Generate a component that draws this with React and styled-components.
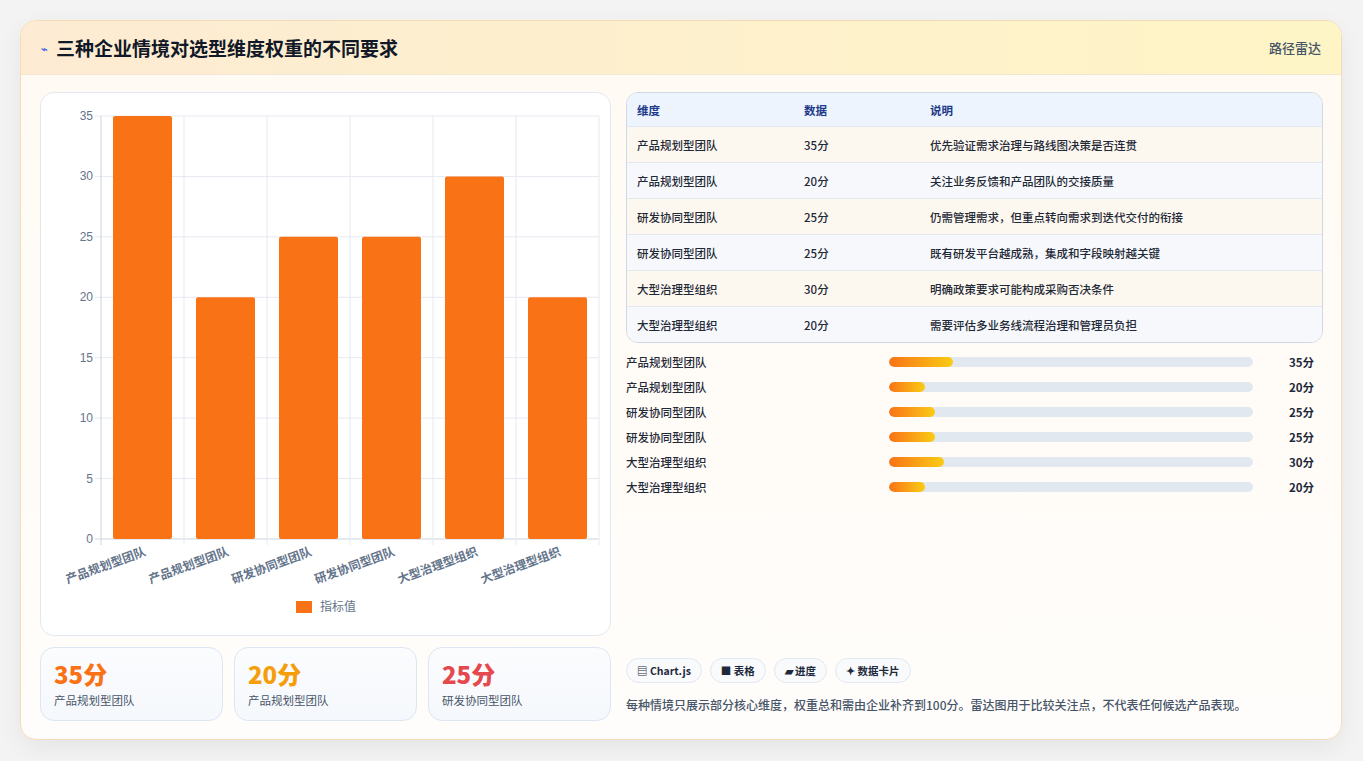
import React from "react";
import styled, { createGlobalStyle } from "styled-components";

const Global = createGlobalStyle`
  html,body{margin:0;padding:0;background:#f3f3f3;}
  body{font-family:"Noto Sans CJK SC","Noto Sans",sans-serif;}
`;

const data = [
  ["产品规划型团队", 35, "优先验证需求治理与路线图决策是否连贯"],
  ["产品规划型团队", 20, "关注业务反馈和产品团队的交接质量"],
  ["研发协同型团队", 25, "仍需管理需求，但重点转向需求到迭代交付的衔接"],
  ["研发协同型团队", 25, "既有研发平台越成熟，集成和字段映射越关键"],
  ["大型治理型组织", 30, "明确政策要求可能构成采购否决条件"],
  ["大型治理型组织", 20, "需要评估多业务线流程治理和管理员负担"],
];

const Page = styled.div`padding:20px 20px 20px 20px;width:1323px;box-sizing:border-box;`;
const Card = styled.div`
  width:1322px;height:720px;box-sizing:border-box;border:1px solid #f6dcb4;border-radius:16px;
  background:linear-gradient(180deg,#fffaf3,#fffdfb);overflow:hidden;display:flex;flex-direction:column;
  box-shadow:0 8px 24px rgba(0,0,0,0.06);
`;
const Header = styled.div`
  height:55px;box-sizing:border-box;display:flex;align-items:center;justify-content:space-between;
  padding:0 20px;background:linear-gradient(90deg,#fdebd3,#fef5c6);border-bottom:1px solid #f3e6d3;
`;
const Title = styled.h1`margin:0;font-size:19px;font-weight:700;color:#111827;display:flex;align-items:center;gap:8px;`;
const Bolt = styled.span`color:#4f6fe0;font-size:11px;`;
const Badge = styled.span`font-size:13px;color:#475569;font-weight:500;`;
const Body = styled.div`flex:1;display:flex;gap:15px;padding:17px 18px 18px 19px;`;
const Left = styled.div`width:571px;display:flex;flex-direction:column;gap:11px;`;
const Right = styled.div`flex:1;display:flex;flex-direction:column;`;
const ChartCard = styled.div`height:544px;box-sizing:border-box;border:1px solid #e2e8f0;border-radius:14px;background:#fff;position:relative;`;
const Stats = styled.div`display:grid;grid-template-columns:repeat(3,1fr);gap:11px;`;
const Stat = styled.div`height:74px;box-sizing:border-box;border:1px solid #dde6f3;border-radius:14px;background:linear-gradient(180deg,#fbfcfe,#f5f8fc);padding:10px 13px;`;
const StatVal = styled.div`font-size:24px;font-weight:800;color:${p=>p.c};line-height:32px;`;
const StatLbl = styled.div`font-size:11.5px;color:#475569;margin-top:2px;`;
const Table = styled.div`border:1px solid #cfd9e6;border-radius:12px;overflow:hidden;`;
const Row = styled.div`
  display:grid;grid-template-columns:167px 126px 1fr;height:${p=>p.h?33:35}px;align-items:center;padding-left:10px;
  font-size:11.5px;color:${p=>p.h?"#1e3a8a":"#1f2937"};font-weight:${p=>p.h?600:500};
  background:${p=>p.h?"#edf4fd":p.odd?"#fdf8ef":"#f6f8fb"};
  border-top:${p=>p.h?"none":"1px solid #e2e8f0"};
`;
const Bars = styled.div`display:flex;flex-direction:column;gap:7px;margin-top:10px;`;
const BarRow = styled.div`display:grid;grid-template-columns:263px 364px 1fr;align-items:center;height:18px;font-size:11.5px;color:#1f2937;font-weight:500;`;
const Track = styled.div`height:10px;border-radius:5px;background:#e2e8f0;overflow:hidden;`;
const Fill = styled.div`height:100%;border-radius:5px;background:linear-gradient(90deg,#f97316,#facc15);`;
const BarVal = styled.span`padding-left:36px;font-weight:700;color:#1e293b;`;
const Spacer = styled.div`flex:1;`;
const Tags = styled.div`display:flex;gap:8px;`;
const Tag = styled.span`height:25px;box-sizing:border-box;padding:0 10px;border:1px solid #e2e8f0;border-radius:13px;background:#f8fafc;font-size:10.5px;font-weight:600;color:#1e293b;display:flex;align-items:center;gap:3px;`;
const Note = styled.p`margin:13px 0 8px;font-size:12px;font-weight:500;color:#475569;`;

function Chart(){
  const x0=60,x1=558,y0=23,y1=446;const ppu=(y1-y0)/35;const cw=(x1-x0)/6;
  return (
    <svg width="570" height="544" style={{display:"block"}}>
      {[0,5,10,15,20,25,30,35].map(v=>{const y=y1-v*ppu;return <g key={v}>
        <line x1={x0-6} x2={x1} y1={y} y2={y} stroke={v===0?"#cbd5e1":"#e5e9f0"}/>
        <text x={x0-8} y={y+4} textAnchor="end" fontSize="12" fill="#64748b" fontFamily="Liberation Sans,sans-serif">{v}</text></g>;})}
      {[0,1,2,3,4,5,6].map(i=><line key={i} x1={x0+i*cw} x2={x0+i*cw} y1={y0} y2={y1+6} stroke={i===0?"#cbd5e1":"#e5e9f0"}/>)}
      {data.map((d,i)=>{const h=d[1]*ppu;return <rect key={i} x={x0+i*cw+12} y={y1-h} width={cw-24} height={h} rx="2" fill="#f97316"/>;})}
      {data.map((d,i)=>{const cx=x0+i*cw+cw/2+4;return <text key={i} transform={`translate(${cx},462) rotate(-20)`} textAnchor="end" fontSize="12" fontWeight="600" fill="#64748b" fontFamily="Noto Sans CJK SC,sans-serif">{d[0]}</text>;})}
      <rect x="255" y="508" width="16" height="12" fill="#f97316"/>
      <text x="279" y="518" fontSize="12" fill="#64748b" fontFamily="Noto Sans CJK SC,sans-serif">指标值</text>
    </svg>
  );
}

export default function App(){
  return <Page><Global/>
    <Card>
      <Header><Title><Bolt>⌁</Bolt>三种企业情境对选型维度权重的不同要求</Title><Badge>路径雷达</Badge></Header>
      <Body>
        <Left>
          <ChartCard><Chart/></ChartCard>
          <Stats>
            <Stat><StatVal c="#f97316">35分</StatVal><StatLbl>产品规划型团队</StatLbl></Stat>
            <Stat><StatVal c="#f59e0b">20分</StatVal><StatLbl>产品规划型团队</StatLbl></Stat>
            <Stat><StatVal c="#e5484d">25分</StatVal><StatLbl>研发协同型团队</StatLbl></Stat>
          </Stats>
        </Left>
        <Right>
          <Table>
            <Row h><span>维度</span><span>数据</span><span>说明</span></Row>
            {data.map((d,i)=><Row key={i} odd={i%2===0}><span>{d[0]}</span><span>{d[1]}分</span><span>{d[2]}</span></Row>)}
          </Table>
          <Bars>
            {data.map((d,i)=><BarRow key={i}><span>{d[0]}</span><Track><Fill style={{width:`${d[1]/2}%`}}/></Track><BarVal>{d[1]}分</BarVal></BarRow>)}
          </Bars>
          <Spacer/>
          <Tags><Tag>▤ Chart.js</Tag><Tag>■ 表格</Tag><Tag>▰ 进度</Tag><Tag>✦ 数据卡片</Tag></Tags>
          <Note>每种情境只展示部分核心维度，权重总和需由企业补齐到100分。雷达图用于比较关注点，不代表任何候选产品表现。</Note>
        </Right>
      </Body>
    </Card>
  </Page>;
}
